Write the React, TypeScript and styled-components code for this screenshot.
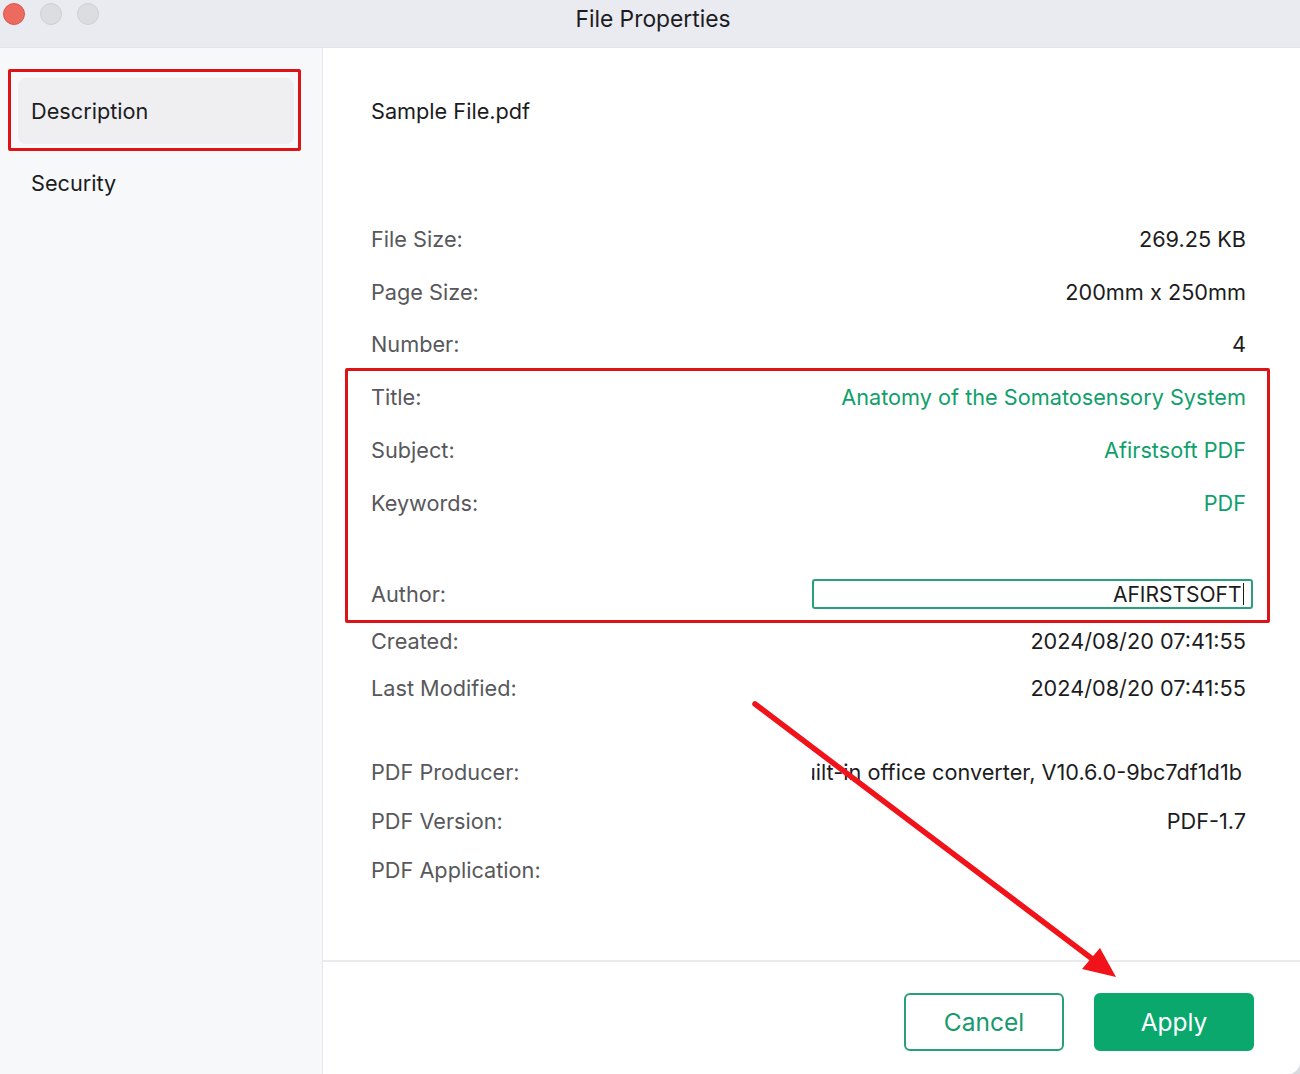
import React from "react";
import styled, { createGlobalStyle } from "styled-components";

const GlobalStyle = createGlobalStyle`
  html, body {
    margin: 0;
    padding: 0;
    background: #d9dadd;
  }
  body {
    font-family: Inter, "Noto Sans", "Liberation Sans", sans-serif;
    -webkit-font-smoothing: antialiased;
  }
`;

const TEXT = "21.7px";

const Window = styled.div`
  position: relative;
  width: 1300px;
  height: 1074px;
  display: flex;
  flex-direction: column;
  background: #ffffff;
  overflow: hidden;
  border-bottom-right-radius: 12px;
`;

const TitleBar = styled.div`
  position: relative;
  height: 48px;
  flex: none;
  display: flex;
  align-items: center;
  justify-content: center;
  background: #e9ebf1;
  border-bottom: 1px solid #e2e4e9;
  box-sizing: border-box;
`;

const Lights = styled.div`
  position: absolute;
  left: 3px;
  top: 3px;
  display: flex;
  gap: 15px;
`;

const Light = styled.span<{ $color: string; $border: string }>`
  width: 22px;
  height: 22px;
  border-radius: 50%;
  background: ${(p) => p.$color};
  border: 1px solid ${(p) => p.$border};
  box-sizing: border-box;
`;

const Title = styled.div`
  font-size: 22.8px;
  color: #1c1c1e;
  margin-top: -10px;
  margin-left: 6px;
`;

const Body = styled.div`
  flex: 1;
  display: flex;
  min-height: 0;
`;

const Sidebar = styled.div`
  width: 323px;
  flex: none;
  background: #f7f8fa;
  border-right: 1px solid #e6e7ea;
  padding: 30px 28px 0 18px;
  box-sizing: border-box;
  display: flex;
  flex-direction: column;
  gap: 6px;
`;

const NavItem = styled.div<{ $active?: boolean }>`
  position: relative;
  height: 66px;
  display: flex;
  align-items: center;
  padding-left: 13px;
  border-radius: 8px;
  font-size: ${TEXT};
  color: #1c1c1e;
  background: ${(p) => (p.$active ? "#efeff1" : "transparent")};

  ${(p) =>
    p.$active &&
    `
    &::after {
      content: "";
      position: absolute;
      top: -9px;
      left: -10px;
      right: -7px;
      bottom: -7px;
      border: 3px solid #dc1418;
      border-radius: 2px;
    }
  `}
`;

const Main = styled.div`
  flex: 1;
  display: flex;
  flex-direction: column;
  min-width: 0;
`;

const Content = styled.div`
  flex: 1;
  padding: 0 54px 0 48px;
  display: flex;
  flex-direction: column;
`;

const FileName = styled.div`
  height: 126px;
  display: flex;
  align-items: center;
  font-size: ${TEXT};
  color: #1c1c1e;
  margin-bottom: 38.5px;
`;

const Row = styled.div<{ $h: number; $mt?: number }>`
  height: ${(p) => p.$h}px;
  margin-top: ${(p) => p.$mt ?? 0}px;
  display: flex;
  align-items: center;
  justify-content: space-between;
  font-size: ${TEXT};
`;

const Label = styled.div`
  color: #58585c;
  white-space: nowrap;
  flex: none;
`;

const Value = styled.div<{ $accent?: boolean; $inset?: number }>`
  width: 434px;
  flex: none;
  display: flex;
  justify-content: flex-end;
  overflow: hidden;
  white-space: nowrap;
  padding-right: ${(p) => p.$inset ?? 0}px;
  box-sizing: border-box;
  color: ${(p) => (p.$accent ? "#109f6c" : "#1c1c1e")};
`;

const Highlight = styled.div`
  position: relative;
  display: flex;
  flex-direction: column;

  &::before {
    content: "";
    position: absolute;
    top: -3px;
    bottom: -5px;
    left: -26px;
    right: -24px;
    border: 3px solid #dc1418;
    border-radius: 2px;
    pointer-events: none;
  }
`;

const Input = styled.div`
  width: 441px;
  height: 30px;
  box-sizing: border-box;
  margin-right: -7px;
  border: 2px solid #2aa079;
  border-radius: 3px;
  display: flex;
  align-items: center;
  justify-content: flex-end;
  padding-right: 7px;
  color: #1c1c1e;
  font-size: 21px;
`;

const Caret = styled.span`
  width: 1.5px;
  height: 22px;
  background: #1c1c1e;
  margin-left: 1px;
`;

const Footer = styled.div`
  height: 114px;
  flex: none;
  border-top: 2px solid #ebebed;
  box-sizing: border-box;
  display: flex;
  align-items: center;
  justify-content: flex-end;
  gap: 30px;
  padding: 0 46px 0 0;
`;

const Button = styled.button<{ $primary?: boolean }>`
  width: 160px;
  height: 58px;
  margin-top: 8px;
  border-radius: 6px;
  font-family: inherit;
  font-size: 24.5px;
  cursor: pointer;
  box-sizing: border-box;
  border: 2px solid ${(p) => (p.$primary ? "#0aa86d" : "#27a079")};
  background: ${(p) => (p.$primary ? "#0aa86d" : "#ffffff")};
  color: ${(p) => (p.$primary ? "#ffffff" : "#179a6c")};
`;

const Overlay = styled.svg`
  position: absolute;
  left: 0;
  top: 0;
  pointer-events: none;
`;

type Field = {
  label: string;
  value: string;
  h: number;
  mt?: number;
  accent?: boolean;
  inset?: number;
};

const topRows: Field[] = [
  { label: "File Size:", value: "269.25 KB", h: 53 },
  { label: "Page Size:", value: "200mm x 250mm", h: 52.5 },
  { label: "Number:", value: "4", h: 52.5 },
];

const metaRows: Field[] = [
  { label: "Title:", value: "Anatomy of the Somatosensory System", h: 53, accent: true },
  { label: "Subject:", value: "Afirstsoft PDF", h: 53, accent: true },
  { label: "Keywords:", value: "PDF", h: 53, accent: true },
];

const bottomRows: Field[] = [
  { label: "Created:", value: "2024/08/20 07:41:55", h: 47 },
  { label: "Last Modified:", value: "2024/08/20 07:41:55", h: 47 },
  {
    label: "PDF Producer:",
    value: "Built-in office converter, V10.6.0-9bc7df1d1b",
    h: 49,
    mt: 36,
    inset: 4,
  },
  { label: "PDF Version:", value: "PDF-1.7", h: 49 },
  { label: "PDF Application:", value: "", h: 49 },
];

const renderRow = (r: Field) => (
  <Row key={r.label} $h={r.h} $mt={r.mt}>
    <Label>{r.label}</Label>
    <Value $accent={r.accent} $inset={r.inset}>
      <span>{r.value}</span>
    </Value>
  </Row>
);

export default function App() {
  return (
    <>
      <GlobalStyle />
      <Window>
        <TitleBar>
          <Lights>
            <Light $color="#ec6a5e" $border="#d8574c" />
            <Light $color="#dcdde1" $border="#cfd0d4" />
            <Light $color="#dcdde1" $border="#cfd0d4" />
          </Lights>
          <Title>File Properties</Title>
        </TitleBar>
        <Body>
          <Sidebar>
            <NavItem $active>Description</NavItem>
            <NavItem>Security</NavItem>
          </Sidebar>
          <Main>
            <Content>
              <FileName>Sample File.pdf</FileName>
              {topRows.map(renderRow)}
              <Highlight>
                {metaRows.map(renderRow)}
                <Row $h={47} $mt={41}>
                  <Label>Author:</Label>
                  <Input>
                    AFIRSTSOFT
                    <Caret />
                  </Input>
                </Row>
              </Highlight>
              {bottomRows.map(renderRow)}
            </Content>
            <Footer>
              <Button>Cancel</Button>
              <Button $primary>Apply</Button>
            </Footer>
          </Main>
        </Body>
        <Overlay width="1300" height="1074" viewBox="0 0 1300 1074">
          <line
            x1="755"
            y1="704"
            x2="1095"
            y2="961"
            stroke="#f0141a"
            strokeWidth="5.5"
            strokeLinecap="round"
          />
          <polygon points="1116,977 1082,969 1100,948" fill="#f0141a" />
        </Overlay>
      </Window>
    </>
  );
}
